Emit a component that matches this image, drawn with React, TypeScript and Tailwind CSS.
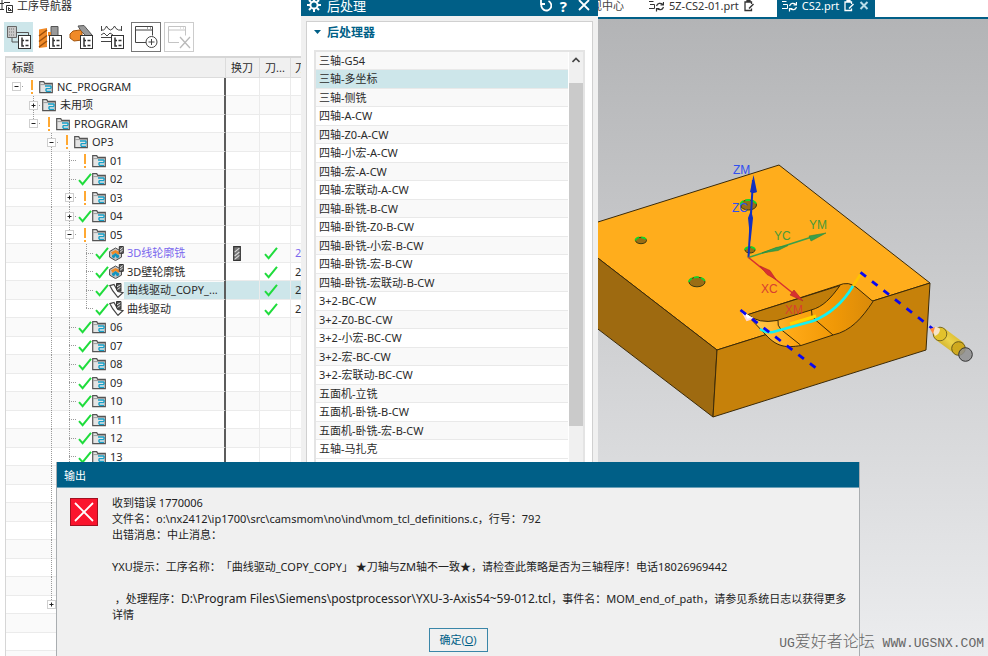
import type { ReactNode } from 'react';

type Status = 'check' | 'warn' | 'none';
type Row = {
  name: string;
  depth: number;
  box?: '+' | '-';
  status?: Status;
  icon?: 'folder' | 'mill' | 'curve';
  ancestors?: number[];
  last?: boolean;
  first?: boolean;
  purple?: boolean;
  selected?: boolean;
  toolChange?: boolean;
  pathReady?: boolean;
};

const GUIDE_X = [10, 27, 45, 63, 80];

const folder = (name: string, status: Status, box?: '+' | '-'): Row => ({
  name,
  depth: 3,
  status,
  box,
  icon: 'folder',
  ancestors: [2],
});

const operation = (name: string, icon: 'mill' | 'curve', extra: Partial<Row> = {}): Row => ({
  name,
  depth: 4,
  status: 'check',
  icon,
  ancestors: [2, 3],
  pathReady: true,
  ...extra,
});

const spacer = (): Row => ({ name: '', depth: 2, status: 'none', ancestors: [2] });
const empty = (): Row => ({ name: '', depth: 0, first: true, last: true });

const rows: Row[] = [
  { name: 'NC_PROGRAM', depth: 0, box: '-', status: 'warn', icon: 'folder', first: true, last: true },
  { name: '未用项', depth: 1, box: '+', status: 'none', icon: 'folder' },
  { name: 'PROGRAM', depth: 1, box: '-', status: 'warn', icon: 'folder', last: true },
  { name: 'OP3', depth: 2, box: '-', status: 'warn', icon: 'folder' },
  folder('01', 'warn'),
  folder('02', 'check'),
  folder('03', 'warn', '+'),
  folder('04', 'check', '+'),
  folder('05', 'warn', '-'),
  operation('3D线轮廓铣', 'mill', { purple: true, toolChange: true }),
  operation('3D壁轮廓铣', 'mill'),
  operation('曲线驱动_COPY_...', 'curve', { selected: true }),
  operation('曲线驱动', 'curve', { last: true }),
  folder('06', 'check'),
  folder('07', 'check'),
  folder('08', 'check'),
  folder('09', 'check'),
  folder('10', 'check'),
  folder('11', 'check'),
  folder('12', 'check'),
  folder('13', 'check'),
  spacer(),
  spacer(),
  spacer(),
  spacer(),
  spacer(),
  spacer(),
  spacer(),
  { name: '', depth: 2, box: '+', status: 'none', last: true },
  empty(),
  empty(),
  empty(),
];

const processors = [
  '三轴-G54',
  '三轴-多坐标',
  '三轴-侧铣',
  '四轴-A-CW',
  '四轴-Z0-A-CW',
  '四轴-小宏-A-CW',
  '四轴-宏-A-CW',
  '四轴-宏联动-A-CW',
  '四轴-卧铣-B-CW',
  '四轴-卧铣-Z0-B-CW',
  '四轴-卧铣-小宏-B-CW',
  '四轴-卧铣-宏-B-CW',
  '四轴-卧铣-宏联动-B-CW',
  '3+2-BC-CW',
  '3+2-Z0-BC-CW',
  '3+2-小宏-BC-CW',
  '3+2-宏-BC-CW',
  '3+2-宏联动-BC-CW',
  '五面机-立铣',
  '五面机-卧铣-B-CW',
  '五面机-卧铣-宏-B-CW',
  '五轴-马扎克',
];

function CheckMark() {
  return (
    <svg width="14" height="14" viewBox="0 0 14 14" className="shrink-0" fill="none">
      <path d="M1 8.2 4.6 12.2 13 1.8" stroke="#1fdc3c" strokeWidth="2" />
    </svg>
  );
}

function WarnMark() {
  return (
    <svg width="14" height="14" viewBox="0 0 14 14" className="shrink-0">
      <path d="M6 0h2v10H6zM6 12h2v2H6z" fill="#ffa832" />
    </svg>
  );
}

function FolderIcon() {
  return (
    <svg width="14" height="14" viewBox="0 0 14 14" className="shrink-0">
      <path d="M.7 12.6V1.6h4l1 1.7h7.6v9.3z" fill="#e4e4e4" stroke="#555" strokeWidth="1.2" />
      <path d="M1.4 4.6h11.4" stroke="#888" strokeWidth=".8" />
      <path d="M6 6h6M12 6v2.6M12 8.6H7M7 8.6v2.6M7 11.4h5" stroke="#18a0c8" strokeWidth="1.4" fill="none" />
    </svg>
  );
}

function MillIcon() {
  return (
    <svg width="15" height="15" viewBox="0 0 15 15" className="shrink-0">
      <path d="M.6 5.5 6.5 2l6 3.5v5.6l-6 3.5-5.9-3.5z" fill="#c4c4c4" stroke="#4a4a4a" />
      <path d="M2 6.2 6.5 4 11 6.2 9.5 9 6.5 7 3.6 9z" fill="#f08a28" />
      <path d="M3 9.4 6.5 7l3.6 2.4v1.8L8 12.4 6.5 10 5 12.4 3 11z" fill="#1593bd" />
      <path d="M10.3.5h4v6.8h-4z" fill="#666" stroke="#333" />
      <path d="m10.8 4 3-2.4M10.8 6.4l3-2.4" stroke="#ddd" />
    </svg>
  );
}

function CurveIcon() {
  return (
    <svg width="15" height="15" viewBox="0 0 15 15" className="shrink-0">
      <path d="M.8 2.600 5 1.400 9 8.500l5 1.200-5 4.600C7.500 12.500 3.500 9 .8 2.600z" fill="#fff" stroke="#444" strokeWidth="1.2" />
      <path d="M7.5.5h4.500v7.600H8.500L7.500 6z" fill="#555" stroke="#333" />
      <path d="m8 3.8 3.400-2M8.400 6.400l3-2" stroke="#ddd" />
    </svg>
  );
}

function ToolChangeIcon() {
  return (
    <svg width="8" height="15" viewBox="0 0 8 15">
      <path d="M.7.7h6.6v13.6H.7z" fill="#777" stroke="#333" strokeWidth="1.2" />
      <path d="m1.6 6.2 4.8-4M1.6 10 6.4 6M1.6 13.4l4.8-4" stroke="#ddd" strokeWidth="1.1" />
    </svg>
  );
}

function Guides({ row }: { row: Row }) {
  const x = GUIDE_X[row.depth];
  const dotted = { stroke: '#9a9a9a', strokeWidth: 1, strokeDasharray: '1 1' };
  return (
    <svg width={x + 9} height="19" className="shrink-0">
      {(row.ancestors ?? []).map((d) => (
        <line key={d} x1={GUIDE_X[d] + 0.5} x2={GUIDE_X[d] + 0.5} y1="0" y2="19" {...dotted} />
      ))}
      {!row.first && <line x1={x + 0.5} x2={x + 0.5} y1="0" y2={row.last ? 9 : 19} {...dotted} />}
      {(row.name !== '' || row.box) && <line x1={x} x2={x + 8} y1="9.5" y2="9.5" {...dotted} />}
      {row.box && (
        <g>
          <rect x={x - 3.5} y="5.5" width="8" height="8" fill="#fff" stroke="#cfcfcf" />
          <path d={`M${x - 1.5} 9.5h4`} stroke="#222" />
          {row.box === '+' && <path d={`M${x + 0.5} 7.5v4`} stroke="#222" />}
        </g>
      )}
    </svg>
  );
}

function TreeRow({ row }: { row: Row }) {
  const tone = row.selected ? 'bg-[#cde6ea]' : '';
  const cell = `border-b border-[#ebebeb] p-0 ${tone}`;
  return (
    <tr className="h-[18px] odd:bg-white even:h-[19px] even:bg-[#fafafa]">
      <td className="border-r-2 border-b border-r-[#5c5c5c] border-b-[#ebebeb] p-0">
        <div className="flex h-[17px] items-center">
          <Guides row={row} />
          {row.status === 'check' && <CheckMark />}
          {row.status === 'warn' && <WarnMark />}
          {row.icon === 'folder' && <FolderIcon />}
          {row.icon === 'mill' && <MillIcon />}
          {row.icon === 'curve' && <CurveIcon />}
          <span
            className={`flex h-[17px] flex-1 items-center whitespace-nowrap ${row.icon === 'folder' ? 'pl-1' : 'pl-[3px]'} ${tone} ${row.purple ? 'text-[#7b68ee]' : ''}`}
          >
            {row.name}
          </span>
        </div>
      </td>
      <td className={`${cell} border-r`}>
        <div className="flex h-[17px] items-center pl-[7px]">{row.toolChange && <ToolChangeIcon />}</div>
      </td>
      <td className={`${cell} border-r`}>
        <div className="flex h-[17px] items-center pl-1">{row.pathReady && <CheckMark />}</div>
      </td>
      <td className={`${cell} pl-1 ${row.purple ? 'text-[#7b68ee]' : ''}`}>{row.pathReady && '2'}</td>
    </tr>
  );
}

function TreeBadge() {
  return (
    <g>
      <rect x="12.5" y="11.5" width="12" height="13" fill="#fff" stroke="#333" />
      <path d="M16 13.5v8.5h2M16 16.5h2M19.5 16.5h3M19.5 21.5h3" stroke="#333" strokeWidth="1.5" fill="none" />
    </g>
  );
}

function ToolButton({ label, className, children }: { label: string; className: string; children: ReactNode }) {
  return (
    <button type="button" aria-label={label} className={`flex h-[30px] items-center justify-center ${className}`}>
      <svg width="26" height="26" viewBox="0 0 26 26" fill="none">
        {children}
      </svg>
    </button>
  );
}

function Navigator() {
  return (
    <aside className="flex h-full w-[301px] shrink-0 flex-col overflow-hidden bg-white">
      <div className="flex h-[22px] items-start leading-3">
        <svg width="14" height="14" viewBox="0 0 14 14" fill="none" stroke="#333" className="mr-[3px]">
          <path d="M0 3.5h4M2 0v10M0 9.5h4M4 2.5h6M6.5 5.5h6v7h-6zM8.5 7.5l3 3M8.5 7.5v3h3" />
        </svg>
        <h2>工序导航器</h2>
      </div>
      <div className="flex gap-[2px] pl-1">
        <ToolButton label="程序顺序视图" className="w-[29px] bg-[#cde6ea]">
          <path d="M1.5 2.5h9v11h-9z" fill="#c8c8c8" stroke="#666" />
          <path d="M3 5h6M3 8h6M3 11h6" stroke="#777" strokeDasharray="1 1" />
          <path d="M10.5 8.5h12v4M6 14v4h6" stroke="#555" />
          <TreeBadge />
        </ToolButton>
        <ToolButton label="机床视图" className="w-[29px]">
          <path d="M2 5.500 10 4v19l-8 1z" fill="#f08a28" />
          <path d="m2 12 8-6M2 17.500l8-6M2 23l8-6" stroke="#9a4f0c" strokeWidth="1.5" />
          <path d="M14 2.5h7v9h-7z" fill="#999" stroke="#555" />
          <path d="M11 8h3v4h-3z" fill="#f08a28" />
          <TreeBadge />
        </ToolButton>
        <ToolButton label="几何视图" className="w-[29px]">
          <path d="m10 2 6-.5 8 9.500-5 2-6-6z" fill="#999" stroke="#555" />
          <path d="M2 10 5 7l7-1 2 2v8l-8 1-4-3z" fill="#f08a28" stroke="#a3560f" />
          <TreeBadge />
        </ToolButton>
        <ToolButton label="加工方法视图" className="w-[29px]">
          <path d="M2.500 2v5M22.500 2v5M2.500 6h2q2-1 3-4 1 3 4 4 3-1 4-4 1 3 4 4h3M2 11l3-2 3 3 3-3 3 2M2 13.500h10M2 17.500h10" stroke="#444" />
          <TreeBadge />
        </ToolButton>
        <ToolButton label="创建" className="ml-[3px] w-[30px] border border-[#777]">
          <path d="M13 18.500H2.500v-16h17v9M2.500 6h17M14 4h1M17 4h1" stroke="#444" />
          <circle cx="18.500" cy="18" r="5.500" fill="#fff" stroke="#444" />
          <path d="M18.500 15v6M15.500 18h6" stroke="#444" />
        </ToolButton>
        <ToolButton label="删除" className="ml-[1px] w-[30px] border border-[#ccc]">
          <path d="M13 18.500H2.500v-16h17v9M2.500 6h17M14 4h1M17 4h1" stroke="#c4c4c4" />
          <path d="m14 13 10 11M24 13 14 24" stroke="#b9b9b9" strokeWidth="1.300" />
        </ToolButton>
      </div>
      <div className="mt-1 ml-[5px] flex-1 overflow-hidden border-t-2 border-l border-[#d6d6d6]">
        <table className="w-full table-fixed border-separate border-spacing-0">
          <colgroup>
            <col className="w-[220px]" />
            <col className="w-[34px]" />
            <col className="w-[31px]" />
            <col />
          </colgroup>
          <thead>
            <tr className="h-5 bg-[#f0f0f0] text-left">
              <th className="border-r border-b border-[#dcdcdc] p-0 pl-[6px] font-normal">标题</th>
              <th className="border-r border-b border-[#dcdcdc] p-0 pl-[5px] font-normal">换刀</th>
              <th className="border-r border-b border-[#dcdcdc] p-0 pl-[5px] font-normal">刀...</th>
              <th className="overflow-hidden border-b border-[#dcdcdc] p-0 pl-1 font-normal whitespace-nowrap">刀</th>
            </tr>
          </thead>
          <tbody>
            {rows.map((row, i) => (
              <TreeRow key={i} row={row} />
            ))}
          </tbody>
        </table>
      </div>
    </aside>
  );
}

function PostDialog() {
  return (
    <section className="flex h-full w-[297px] shrink-0 flex-col overflow-hidden bg-[#f0f0f0]">
      <header className="flex h-4 items-start bg-[#005f87] pr-2 pl-[6px] text-white">
        <svg width="14" height="12" viewBox="0 0 14 12" fill="none" stroke="#fff">
          <circle cx="7" cy="5" r="3.600" strokeWidth="2" />
          <path d="M7-2v3M7 9v3M0 5h3M11 5h3M2 0l2 2M12 0l-2 2M2 10l2-2M12 10l-2-2" strokeWidth="2" />
        </svg>
        <h2 className="ml-[6px] flex-1 text-[13px] leading-3">后处理</h2>
        <button type="button" aria-label="重置" className="mr-2">
          <svg width="12" height="12" viewBox="0 0 12 12" fill="none" stroke="#fff" strokeWidth="1.800">
            <path d="M8.500 1A5 5 0 1 1 2 3M1 0v4h4" />
          </svg>
        </button>
        <button type="button" aria-label="帮助" className="mr-[11px] text-[15px] leading-3 font-bold">
          ?
        </button>
        <button type="button" aria-label="关闭">
          <svg width="12" height="12" viewBox="0 0 12 12" stroke="#fff" strokeWidth="1.800">
            <path d="m1 0 10 10M11 0 1 10" />
          </svg>
        </button>
      </header>
      <div className="mx-[5px] mt-[5px] flex flex-1 flex-col overflow-hidden border border-[#d0d0d0] bg-white">
        <div className="flex h-[21px] items-center gap-[6px] pl-[7px] text-[#005f87]">
          <svg width="7" height="5" viewBox="0 0 7 5">
            <path d="M0 0h7L3.500 4z" fill="#005f87" />
          </svg>
          <h3 className="text-xs font-bold">后处理器</h3>
        </div>
        <div className="mx-[7px] mt-[7px] flex h-[440px] gap-px border-2 border-b-0 border-[#e4e4e4]">
          <ul role="listbox" aria-label="后处理器" className="flex-1">
            {processors.map((name, i) => (
              <li
                key={name}
                role="option"
                aria-selected={i === 1}
                className={`flex h-[18px] items-center border-b border-[#e9e9e9] pl-[3px] even:h-[19px] ${i === 1 ? 'bg-[#cde6ea]' : 'odd:bg-[#f9f9f9]'}`}
              >
                {name}
              </li>
            ))}
          </ul>
          <div className="w-[14px] bg-[#f0f0f0]">
            <button type="button" aria-label="向上滚动" className="flex h-[16px] w-full items-center justify-center">
              <svg width="8" height="6" viewBox="0 0 8 6" fill="none">
                <path d="M.500 5 4 1.500 7.500 5" stroke="#444" strokeWidth="1.600" />
              </svg>
            </button>
            <div className="mt-[15px] h-[343px] bg-[#cacaca]" />
          </div>
        </div>
      </div>
    </section>
  );
}

function SyncIcon() {
  return (
    <svg width="15" height="12" viewBox="0 0 15 12" fill="none" stroke="currentColor" className="shrink-0">
      <path d="M0 1.500h4.500M1 4.500h4.500v4M0 8.500h5.500" />
      <path d="M7.500 6c1-3 4-3.500 6.500-1.500M14.500 2v3h-3M14.500 7c-1 3-4 3.500-6.500 1.500M7.500 11.500v-3h3" strokeWidth="1.200" />
    </svg>
  );
}

function PartIcon() {
  return (
    <svg width="10" height="12" viewBox="0 0 10 12" fill="none" stroke="currentColor" className="shrink-0">
      <path d="M7.500 4V2H1v8.500h6.500V8.500M3 2V.500h3V2" strokeWidth="1.300" />
      <path d="M9.500 4 5 8.500" strokeWidth="1.500" />
    </svg>
  );
}

function PartDrawing() {
  const edge = { stroke: '#3b2a08', strokeWidth: 1 };
  return (
    <svg viewBox="598 19 390 637" preserveAspectRatio="xMinYMin slice" className="block h-full w-full" fill="none">
      <defs>
        <linearGradient id="floor" x1="0" x2="1">
          <stop offset="0" stopColor="#ffd05a" />
          <stop offset=".35" stopColor="#ffa916" />
          <stop offset=".7" stopColor="#f09806" />
          <stop offset="1" stopColor="#d98a0a" />
        </linearGradient>
        <linearGradient id="barrel" x1="0" y1="1" x2="1" y2="0">
          <stop offset="0" stopColor="#b89410" />
          <stop offset=".5" stopColor="#ecd34a" />
          <stop offset="1" stopColor="#c9a318" />
        </linearGradient>
      </defs>
      <path d="M590 224.500 779 165l151 118-213 67-127-98z" fill="#ffad1c" {...edge} />
      <path d="M590 252l127 98-4 67-123-94z" fill="#9e6a10" {...edge} />
      <path d="m717 350 213-67-4 67-213 67z" fill="#c6810a" {...edge} />

      <path
        d="M747 315 838 285.500Q849 280.500 857 288L873 301.500C862 318 851 331 833 335L801 345.500C786 348 777 347 766 335z"
        fill="url(#floor)"
        {...edge}
      />
      <path d="M748 314.500 840 285.500C831 298 823 307 811 310L777 320.500Q758 324 748 314.500z" fill="#c07d0a" {...edge} />
      <path d="M811.500 310q-1 6 4 10L833 335M778 320.500q-1 5 3 9L800.500 345" {...edge} />
      <path d="m790 324 26-8" stroke="#ffd400" strokeWidth="3" />
      <path d="M853 286 862 272" stroke="#ffc400" strokeWidth="2.500" />
      <path d="M760 329Q766 333 773 332L813 321Q838 311 853 286" stroke="#15f0f0" strokeWidth="2.600" />
      <path d="m742 311 5 9 6-2" fill="#fff" stroke="#ffd9dc" strokeWidth="2" />
      <path d="m740.500 310 76 58.500M860.500 272.300 933 329" stroke="#0a08f0" strokeWidth="2.800" strokeDasharray="7 7.600" />

      {[
        [748.500, 205, 8, 5],
        [641, 240.500, 5.500, 3.200],
        [697, 282, 8, 4.800],
        [750, 250, 5, 3],
      ].map(([cx, cy, rx, ry]) => (
        <g key={`${cx}-${cy}`}>
          <ellipse cx={cx} cy={cy} rx={rx} ry={ry} fill="#9a6d14" stroke="#3a3a10" />
          <path d={`M${cx - rx} ${cy}A${rx} ${ry} 0 0 1 ${cx + rx} ${cy}`} stroke="#12d82a" strokeWidth="1.800" strokeDasharray="5 2" />
        </g>
      ))}

      <path d="M748.500 257.500 753 180" stroke="#1230c0" strokeWidth="2" />
      <path d="m753.500 175 3.500 17q-4 2-7 0zM751 210l2 8-2.500 24-2.500-24z" fill="#1230c0" />
      <path d="m748.500 257.500 68-22" stroke="#3aa04a" strokeWidth="1.500" />
      <path d="m826 233-15 8-2-5zM762 253l14-5.500 12-2-10 5z" fill="#3aa04a" stroke="#2e8a3c" strokeWidth=".600" />
      <path d="m748.500 257.500 46 37" stroke="#d83030" strokeWidth="1.500" />
      <path d="m803 301-13-6 4-5zM760 266l10 4.500 6 9-9-5z" fill="#d83030" stroke="#b02828" strokeWidth=".600" />
      <g fontFamily='"Liberation Sans", Arial, sans-serif' fontSize="12">
        <text x="733" y="174" fill="#3050f0">ZM</text>
        <text x="732" y="212" fill="#3050f0">ZC</text>
        <text x="774" y="240" fill="#4a9a38">YC</text>
        <text x="809" y="229" fill="#4a9a38">YM</text>
        <text x="761" y="293" fill="#d84030">XC</text>
        <text x="785" y="314" fill="#d84030">XM</text>
      </g>

      <path d="m944 328 20 15-9 11-19-14z" fill="url(#barrel)" />
      <circle cx="940" cy="334" r="6.800" fill="#e2c22c" stroke="#7a6a20" />
      <circle cx="958.500" cy="348.500" r="6.800" fill="#cfa91e" stroke="#6a5a18" />
      <circle cx="965.500" cy="354.500" r="6.800" fill="#8f8f8f" fillOpacity=".85" stroke="#333" />
      <path d="M931 329q6-4 9 0 0 5-5 7z" fill="#f6e4c8" />
      <path d="m930 329 5-2-2 7z" fill="#ff8a3c" />
    </svg>
  );
}

function GraphicsArea() {
  return (
    <main className="flex h-full min-w-0 flex-1 flex-col overflow-hidden">
      <nav className="flex h-[19px] shrink-0 items-stretch border-b-2 border-[#005f87] bg-white leading-3">
        <a href="#center" className="flex w-[26px] justify-end overflow-hidden whitespace-nowrap text-[#444]">
          现中心
        </a>
        <a href="#cs2-01" className="ml-[25px] flex items-start gap-[5px] text-[#333]">
          <SyncIcon />
          5Z-CS2-01.prt
          <PartIcon />
        </a>
        <a href="#cs2" aria-current="page" className="ml-[23px] flex w-[98px] items-start gap-[5px] bg-[#005f87] pl-[5px] text-white">
          <SyncIcon />
          CS2.prt
          <PartIcon />
          <svg width="10" height="11" viewBox="0 0 10 11" stroke="#b8dce8" strokeWidth="2">
            <path d="m1.500 2 7 7M8.500 2l-7 7" />
          </svg>
        </a>
      </nav>
      <div className="min-h-0 flex-1 bg-linear-to-b from-[#b3b4b6] to-[#ecedef]">
        <PartDrawing />
      </div>
    </main>
  );
}

function OutputDialog() {
  return (
    <section
      role="alertdialog"
      aria-labelledby="output-title"
      className="absolute top-[462px] left-[56px] w-[804px] border-x border-[#a9adb0] bg-[#f0f0f0]"
    >
      <h2 id="output-title" className="h-[26px] border-b border-[#6aa0b8] bg-[#005f87] pl-[7px] leading-[27px] text-white">
        输出
      </h2>
      <div className="flex gap-[14px] pt-[7px] pl-[13px]">
        <svg width="28" height="28" viewBox="0 0 28 28" className="mt-[3px] shrink-0">
          <rect x=".5" y=".5" width="27" height="27" fill="#fa142d" stroke="#a01020" />
          <path d="m5 5 18 18M23 5 5 23" stroke="#fff" strokeWidth="1.800" />
        </svg>
        <p className="leading-4 whitespace-pre text-[#222] [text-spacing-trim:space-all]">
          {'收到错误 1770006\n'}
          {'文件名：o:\\nx2412\\ip1700\\src\\camsmom\\no\\ind\\mom_tcl_definitions.c，行号：792\n'}
          {'出错消息：中止消息：\n\n'}
          {'YXU提示：工序名称：「曲线驱动_COPY_COPY」 ★刀轴与ZM轴不一致★，请检查此策略是否为三轴程序！电话18026969442\n\n'}
          {' ，处理程序：'}
          <span className="text-xs leading-4">{'D:\\Program Files\\Siemens\\postprocessor\\YXU-3-Axis54~59-012.tcl'}</span>
          {'，事件名：MOM_end_of_path，请参见系统日志以获得更多\n'}
          {'详情'}
        </p>
      </div>
      <div className="flex justify-center pt-[5px] pb-4">
        <button type="button" className="h-6 w-[59px] border border-[#3a86a8] text-[#005f87]">
          确定(<u>O</u>)
        </button>
      </div>
    </section>
  );
}

export default function App() {
  return (
    <div className="relative flex h-screen overflow-hidden bg-white font-['Noto_Sans','Noto_Sans_CJK_SC',sans-serif] text-[11px] leading-[14px] text-[#2b2b2b]">
      <Navigator />
      <PostDialog />
      <GraphicsArea />
      <OutputDialog />
      <p className="absolute right-[4px] bottom-[2px] font-['Liberation_Mono','Noto_Sans_CJK_SC',monospace] text-[13px] leading-5 whitespace-nowrap text-[#666]">
        UG<span className="text-base leading-5 font-light">爱好者论坛</span> WWW.UGSNX.COM
      </p>
    </div>
  );
}
